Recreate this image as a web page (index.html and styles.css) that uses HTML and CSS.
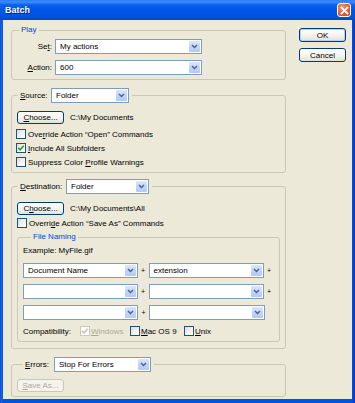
FILE: index.html
```html
<!DOCTYPE html>
<html>
<head>
<meta charset="utf-8">
<title>Batch</title>
<link rel="stylesheet" href="styles.css">
</head>
<body>
<div class="window">
  <div class="titlebar">
    <span class="title">Batch</span>
    <span class="close"><svg width="9" height="9" viewBox="0 0 9 9"><path d="M1.5 1.5 L7.5 7.5 M7.5 1.5 L1.5 7.5" stroke="#fff" stroke-width="1.8" stroke-linecap="square"/></svg></span>
  </div>
  <div class="client">
    <div class="main">
      <fieldset class="group play">
        <legend class="legend-text">Play</legend>
        <div class="play-grid">
          <span class="lbl">Se<u>t</u>:</span>
          <div class="select w-play"><span class="val">My actions</span><span class="arrow"><svg width="7" height="5" viewBox="0 0 7 5"><path d="M1 1 L3.5 3.5 L6 1" fill="none" stroke="#4D6185" stroke-width="1.4"/></svg></span></div>
          <span class="lbl"><u>A</u>ction:</span>
          <div class="select w-play"><span class="val">600</span><span class="arrow"><svg width="7" height="5" viewBox="0 0 7 5"><path d="M1 1 L3.5 3.5 L6 1" fill="none" stroke="#4D6185" stroke-width="1.4"/></svg></span></div>
        </div>
      </fieldset>

      <fieldset class="group source">
        <legend class="legend-ctrl src-legend"><span class="ltxt"><u>S</u>ource:</span><span class="select w-src"><span class="val">Folder</span><span class="arrow"><svg width="7" height="5" viewBox="0 0 7 5"><path d="M1 1 L3.5 3.5 L6 1" fill="none" stroke="#4D6185" stroke-width="1.4"/></svg></span></span></legend>
        <div class="choose-row src-choose"><span class="btn"><u>C</u>hoose...</span><span class="path">C:\My Documents</span></div>
        <div class="check-row first"><span class="cb"></span><span>Ove<u>r</u>ride Action “Open” Commands</span></div>
        <div class="check-row"><span class="cb checked"><svg width="8" height="8" viewBox="0 0 8 8"><path d="M1.2 3.8 L3.1 5.8 L6.8 1.8" fill="none" stroke="#21A121" stroke-width="1.6"/></svg></span><span><u>I</u>nclude All Subfolders</span></div>
        <div class="check-row last"><span class="cb"></span><span>Suppress Color <u>P</u>rofile Warnings</span></div>
      </fieldset>

      <fieldset class="group dest">
        <legend class="legend-ctrl dst-legend"><span class="ltxt"><u>D</u>estination:</span><span class="select w-dst"><span class="val">Folder</span><span class="arrow"><svg width="7" height="5" viewBox="0 0 7 5"><path d="M1 1 L3.5 3.5 L6 1" fill="none" stroke="#4D6185" stroke-width="1.4"/></svg></span></span></legend>
        <div class="choose-row dst-choose"><span class="btn">C<u>h</u>oose...</span><span class="path">C:\My Documents\All</span></div>
        <div class="check-row dst-check"><span class="cb"></span><span>Overri<u>d</u>e Action “Save As” Commands</span></div>

        <fieldset class="group naming">
          <legend class="legend-text naming-legend">File Naming</legend>
          <div class="example">Example: MyFile.gif</div>
          <div class="name-row">
            <div class="select w-n1"><span class="val">Document Name</span><span class="arrow"><svg width="7" height="5" viewBox="0 0 7 5"><path d="M1 1 L3.5 3.5 L6 1" fill="none" stroke="#4D6185" stroke-width="1.4"/></svg></span></div>
            <span class="plus">+</span>
            <div class="select w-n2"><span class="val">extension</span><span class="arrow"><svg width="7" height="5" viewBox="0 0 7 5"><path d="M1 1 L3.5 3.5 L6 1" fill="none" stroke="#4D6185" stroke-width="1.4"/></svg></span></div>
            <span class="plus">+</span>
          </div>
          <div class="name-row">
            <div class="select w-n1"><span class="val"></span><span class="arrow"><svg width="7" height="5" viewBox="0 0 7 5"><path d="M1 1 L3.5 3.5 L6 1" fill="none" stroke="#4D6185" stroke-width="1.4"/></svg></span></div>
            <span class="plus">+</span>
            <div class="select w-n2"><span class="val"></span><span class="arrow"><svg width="7" height="5" viewBox="0 0 7 5"><path d="M1 1 L3.5 3.5 L6 1" fill="none" stroke="#4D6185" stroke-width="1.4"/></svg></span></div>
            <span class="plus">+</span>
          </div>
          <div class="name-row">
            <div class="select w-n1"><span class="val"></span><span class="arrow"><svg width="7" height="5" viewBox="0 0 7 5"><path d="M1 1 L3.5 3.5 L6 1" fill="none" stroke="#4D6185" stroke-width="1.4"/></svg></span></div>
            <span class="plus">+</span>
            <div class="select w-n2"><span class="val"></span><span class="arrow"><svg width="7" height="5" viewBox="0 0 7 5"><path d="M1 1 L3.5 3.5 L6 1" fill="none" stroke="#4D6185" stroke-width="1.4"/></svg></span></div>
          </div>
          <div class="compat-row">
            <span class="compat-lbl">Compatibility:</span>
            <span class="compat-item c-win disabled"><span class="cb checked dis"><svg width="8" height="8" viewBox="0 0 8 8"><path d="M1.2 3.8 L3.1 5.8 L6.8 1.8" fill="none" stroke="#C6C4B8" stroke-width="1.6"/></svg></span><span><u>W</u>indows</span></span>
            <span class="compat-item c-mac"><span class="cb"></span><span><u>M</u>ac OS 9</span></span>
            <span class="compat-item c-unix"><span class="cb"></span><span><u>U</u>nix</span></span>
          </div>
        </fieldset>
      </fieldset>

      <fieldset class="group errors">
        <legend class="legend-ctrl err-legend"><span class="ltxt"><u>E</u>rrors:</span><span class="select w-err"><span class="val">Stop For Errors</span><span class="arrow"><svg width="7" height="5" viewBox="0 0 7 5"><path d="M1 1 L3.5 3.5 L6 1" fill="none" stroke="#4D6185" stroke-width="1.4"/></svg></span></span></legend>
        <div class="choose-row err-row"><span class="btn disabled-btn"><u>S</u>ave As...</span></div>
      </fieldset>
    </div>
    <div class="side">
      <span class="btn big default">OK</span>
      <span class="btn big">Cancel</span>
    </div>
  </div>
</div>
</body>
</html>
```

FILE: styles.css
```css
* { box-sizing: border-box; }
html, body { margin: 0; padding: 0; }
body {
  width: 355px;
  height: 403px;
  overflow: hidden;
  font-family: "Liberation Sans", Arial, sans-serif;
  font-size: 8px;
  color: #000;
  background: #0054E3;
}
u { text-decoration: underline; text-underline-offset: 1px; }

.window {
  width: 355px;
  height: 403px;
  display: flex;
  flex-direction: column;
  background: linear-gradient(to right, #0831D9 0, #166AEE 1px, #0054E3 3px, #0054E3 352px, #0A3ACD 354px);
}

.titlebar {
  height: 20px;
  flex: none;
  display: flex;
  align-items: center;
  justify-content: space-between;
  padding: 0 4px 0 5px;
  background: linear-gradient(to bottom, #2A7BF5 0, #3C8DFA 2px, #0A5FEB 5px, #0055E5 10px, #0054E3 15px, #0050DA 18px, #0046C6 20px);
}
.title {
  color: #fff;
  font-weight: bold;
  font-size: 9px;
  text-shadow: 1px 1px 0 #0A1E7A;
}
.close {
  width: 14px;
  height: 14px;
  border: 1px solid #fff;
  border-radius: 3px;
  background: radial-gradient(circle at 35% 30%, #F39A7C 0, #E5643D 45%, #CC4217 100%);
  display: flex;
  align-items: center;
  justify-content: center;
}

.client {
  flex: 1;
  margin: 0 3px 4px 3px;
  background: #ECE9D8;
  display: flex;
  padding: 5px 6px 0 8px;
}
.main {
  width: 275px;
  display: flex;
  flex-direction: column;
}
.side {
  margin-left: 13px;
  margin-top: 3px;
  display: flex;
  flex-direction: column;
  gap: 6px;
}

/* group boxes */
.group {
  margin: 0;
  padding: 0;
  border: 1px solid #C9C7B8;
  border-radius: 3px;
  min-inline-size: 0;
}
.legend-text {
  padding: 0 2px;
  line-height: 10px;
  color: #0046D5;
  margin-left: 7px;
}
.legend-ctrl {
  padding: 0 3px 0 2px;
}
.legend-ctrl > .ltxt { display: inline-block; vertical-align: middle; line-height: 15px; }
.legend-ctrl > .select { display: inline-flex; vertical-align: middle; }

.play .play-grid {
  display: grid;
  grid-template-columns: 40px 147px;
  column-gap: 3px;
  row-gap: 6px;
  padding: 4px 0 4px 0;
  align-items: center;
}
.lbl { text-align: right; }

.source { margin-top: 8px; }
.src-legend { margin-left: 6px; }
.src-legend .ltxt { width: 31px; }

.dest { margin-top: 6px; padding: 0 5px 6px 5px; }
.dst-legend { margin-left: 1px; }
.dst-legend .ltxt { width: 46px; }

.errors { margin-top: 8px; padding-bottom: 4px; }
.err-legend { margin-left: 11px; }
.err-legend .ltxt { width: 29px; }

/* select */
.select {
  display: flex;
  height: 15px;
  background: #fff;
  border: 1px solid #7F9DB9;
  align-items: stretch;
}
.select .val {
  flex: 1;
  padding-left: 4px;
  line-height: 13px;
  white-space: nowrap;
  overflow: hidden;
}
.select .arrow {
  width: 11px;
  margin: 1px;
  border-radius: 1px;
  background: linear-gradient(to bottom, #DCE6FD 0, #C3D4FB 50%, #B2C8F7 100%);
  display: flex;
  align-items: center;
  justify-content: center;
}
.w-play { width: 147px; }
.w-src { width: 78px; }
.w-dst { width: 83px; }
.w-err { width: 97px; }
.w-n1 { width: 115px; }
.w-n2 { width: 116px; }

/* buttons */
.btn {
  display: inline-flex;
  align-items: center;
  justify-content: center;
  height: 13px;
  width: 47px;
  border: 1px solid #003C74;
  border-radius: 3px;
  background: linear-gradient(to bottom, #FFFFFF 0, #F6F5F0 50%, #E3E1D6 100%);
  font-size: 8px;
  line-height: 11px;
  flex: none;
}
.btn.big { height: 14px; }
.btn.default { box-shadow: inset 0 0 0 1px #B7CFF5; }
.disabled-btn { border-color: #C9C7BA; color: #ACA899; background: #F4F3EE; }

.choose-row { display: flex; align-items: center; }
.choose-row .path { margin-left: 6px; }
.src-choose { margin: 8px 0 0 5px; }
.dst-choose { margin-top: 8px; }
.err-row { margin: 7px 0 0 5px; }

/* checkboxes */
.check-row {
  display: flex;
  align-items: center;
  height: 14px;
  padding-left: 4px;
}
.check-row .cb { margin-right: 2px; }
.check-row.first { margin-top: 3px; }
.check-row.last { margin-bottom: 3px; }
.dst-check { padding-left: 0; margin-top: 1px; }

.cb {
  width: 10px;
  height: 10px;
  border: 1px solid #1C5180;
  background: linear-gradient(135deg, #DCDCD7 0, #F5F5F1 60%, #FFFFFF 100%);
  display: inline-flex;
  align-items: center;
  justify-content: center;
  flex: none;
}
.cb.dis { border-color: #CAC8BB; background: #fff; }

/* file naming */
.naming { margin-top: 2px; padding: 0 5px 3px 5px; }
.naming-legend { margin-left: 8px; }
.example { margin-top: 2px; line-height: 14px; }
.name-row { display: flex; align-items: center; margin-top: 6px; }
.example + .name-row { margin-top: 5px; }
.plus { width: 10px; text-align: center; font-size: 7px; }
.plus:nth-child(2) { width: 11px; }

.compat-row { display: flex; align-items: center; height: 14px; margin-top: 4px; }
.compat-lbl { width: 57px; }
.compat-item { display: flex; align-items: center; }
.compat-item .cb { margin-right: 1px; }
.c-win { width: 50px; }
.c-mac { width: 54px; }
.disabled { color: #ACA899; }
```
